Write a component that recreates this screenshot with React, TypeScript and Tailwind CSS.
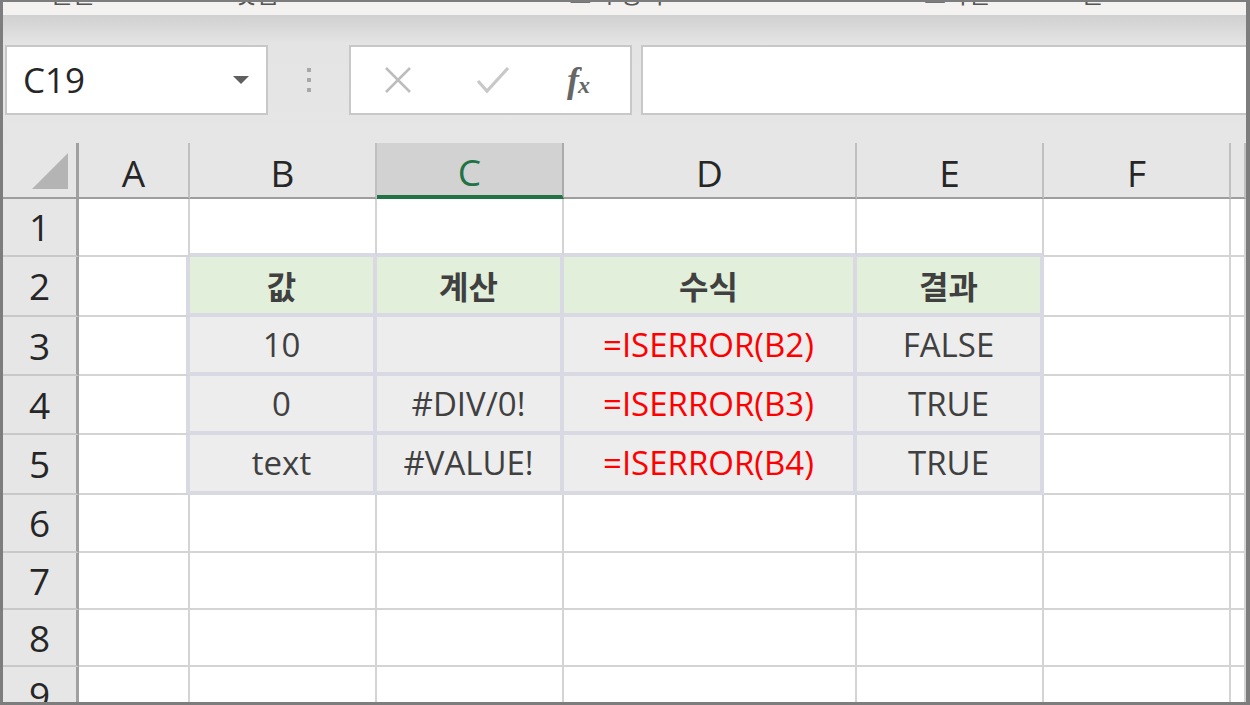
import React from "react";

const cols = ["A", "B", "C", "D", "E", "F", ""];
const rowHeights = [58, 60, 59, 59, 60, 58, 57, 57, 58];

type Cell = { text?: string; kind?: "head" | "body"; red?: boolean };

const table: Record<number, Cell[]> = {
  2: [
    { text: "값", kind: "head" },
    { text: "계산", kind: "head" },
    { text: "수식", kind: "head" },
    { text: "결과", kind: "head" },
  ],
  3: [
    { text: "10", kind: "body" },
    { text: "", kind: "body" },
    { text: "=ISERROR(B2)", kind: "body", red: true },
    { text: "FALSE", kind: "body" },
  ],
  4: [
    { text: "0", kind: "body" },
    { text: "#DIV/0!", kind: "body" },
    { text: "=ISERROR(B3)", kind: "body", red: true },
    { text: "TRUE", kind: "body" },
  ],
  5: [
    { text: "text", kind: "body" },
    { text: "#VALUE!", kind: "body" },
    { text: "=ISERROR(B4)", kind: "body", red: true },
    { text: "TRUE", kind: "body" },
  ],
};

const font = { fontFamily: "'Open Sans', 'Noto Sans CJK KR', sans-serif" };

function ToolStrip() {
  return (
    <div className="h-[13px] shrink-0 bg-[#f3f2f1] flex overflow-hidden text-[24px] leading-none text-[#555]">
      <span className="ml-[48px] -mt-[20px]">글꼴</span>
      <span className="ml-[140px] -mt-[20px]">맞춤</span>
      <span className="ml-[290px] -mt-[20px]">표시 형식</span>
      <span className="ml-[260px] -mt-[20px]">스타일</span>
      <span className="ml-[90px] -mt-[20px]">셀</span>
    </div>
  );
}

function FormulaBar() {
  return (
    <div className="h-[128px] shrink-0 bg-gradient-to-b from-[#d0d0d0] via-[#e4e4e4] via-[22%] to-[#e6e6e6] pt-[30px]">
      <div className="flex items-start h-[70px]">
        <div className="ml-[2px] w-[263px] h-[70px] bg-white border-2 border-[#c8c8c8] flex items-center pl-[16px] pr-[16px]">
          <span className="text-[35px] text-[#262626] flex-1">C19</span>
          <svg width="18" height="10" viewBox="0 0 18 10">
            <path d="M1 1 L17 1 L9 9 Z" fill="#5f5f5f" />
          </svg>
        </div>
        <div className="w-[81px] h-[70px] flex flex-col items-center justify-center gap-[6px]">
          <div className="w-[4px] h-[4px] bg-[#a8a8a8]" />
          <div className="w-[4px] h-[4px] bg-[#a8a8a8]" />
          <div className="w-[4px] h-[4px] bg-[#a8a8a8]" />
        </div>
        <div className="w-[283px] h-[70px] bg-white border-2 border-[#c8c8c8] flex items-center">
          <svg className="ml-[32px]" width="30" height="30" viewBox="0 0 30 30">
            <path d="M3 3 L27 27 M27 3 L3 27" stroke="#bdbdbd" strokeWidth="2.5" />
          </svg>
          <svg className="ml-[62px]" width="36" height="30" viewBox="0 0 36 30">
            <path d="M3 16 L12 26 L33 3" stroke="#c8c8c8" strokeWidth="3.2" fill="none" />
          </svg>
          <span
            className="ml-[56px] text-[#666] italic font-bold flex items-end leading-none"
            style={{ fontFamily: "'Liberation Serif', serif" }}
          >
            <span className="text-[36px]">f</span>
            <span className="text-[24px] -ml-[1px] mb-[1px]">x</span>
          </span>
        </div>
        <div className="ml-[9px] flex-1 h-[70px] bg-white border-y-2 border-l-2 border-[#c8c8c8]" />
      </div>
    </div>
  );
}

function Sheet() {
  const cells: React.ReactNode[] = [];

  // column header row
  cells.push(
    <div
      key="corner"
      className="bg-[#e6e6e6] border-r-[3px] border-b-2 border-r-[#a0a0a0] border-b-[#9e9e9e] flex items-end justify-end pr-[8px] pb-[8px]"
    >
      <svg width="36" height="36" viewBox="0 0 36 36">
        <path d="M36 0 L36 36 L0 36 Z" fill="#b4b4b4" />
      </svg>
    </div>
  );
  cols.forEach((c, i) => {
    const sel = c === "C";
    cells.push(
      <div
        key={"h" + i}
        className={
          sel
            ? "bg-[#d2d2d2] border-b-[4px] border-b-[#217346] border-r-2 border-r-[#ababab] flex items-center justify-center text-[37px] text-[#217346] pt-[6px]"
            : "bg-[#e6e6e6] border-b-2 border-b-[#9e9e9e] border-r-2 border-r-[#c0c0c0] flex items-center justify-center text-[37px] text-[#262626] pt-[6px]"
        }
      >
        {c}
      </div>
    );
  });

  rowHeights.forEach((_, r) => {
    const row = r + 1;
    cells.push(
      <div
        key={"r" + row}
        className="bg-[#e6e6e6] border-r-[3px] border-r-[#a0a0a0] border-b-2 border-b-[#c8c8c8] flex items-center justify-center text-[37px] text-[#262626]"
      >
        {row}
      </div>
    );
    cols.forEach((_, ci) => {
      const inTable = row >= 2 && row <= 5 && ci >= 1 && ci <= 4;
      const aboveTable = row === 1 && ci >= 1 && ci <= 4;
      const leftOfTable = row >= 2 && row <= 5 && ci === 0;
      if (inTable) {
        const cell = table[row][ci - 1];
        const head = cell.kind === "head";
        cells.push(
          <div
            key={row + "-" + ci}
            className={
              head
                ? "bg-[#e2efda] border-r-4 border-b-4 border-[#d9d9e4] flex items-center justify-center text-[32px] font-bold text-[#333]"
                : "bg-[#ededed] border-r-4 border-b-4 border-[#d9d9e4] flex items-center justify-center text-[33px]"
            }
            style={head ? { fontFamily: "'Noto Sans CJK KR', sans-serif" } : undefined}
          >
            <span className={cell.red ? "text-[#ff0000]" : "text-[#404040]"}>{cell.text}</span>
          </div>
        );
      } else {
        cells.push(
          <div
            key={row + "-" + ci}
            className={
              aboveTable
                ? "bg-white border-r-2 border-r-[#d4d4d4] border-b-4 border-b-[#d9d9e4]"
                : leftOfTable
                ? "bg-white border-r-4 border-r-[#d9d9e4] border-b-2 border-b-[#d4d4d4]"
                : "bg-white border-r-2 border-b-2 border-[#d4d4d4]"
            }
          />
        );
      }
    });
  });

  return (
    <div className="shrink-0 grid grid-cols-[76px_111px_187px_187px_293px_187px_187px_1fr] grid-rows-[56px_58px_60px_59px_59px_60px_58px_57px_57px_58px]">
      {cells}
    </div>
  );
}

export default function App() {
  return (
    <div
      className="w-[1250px] h-[705px] border-t-2 border-l-[3px] border-r-4 border-b-[3px] border-[#7d7d7d] overflow-hidden flex flex-col bg-[#e6e6e6]"
      style={font}
    >
      <ToolStrip />
      <FormulaBar />
      <Sheet />
    </div>
  );
}
